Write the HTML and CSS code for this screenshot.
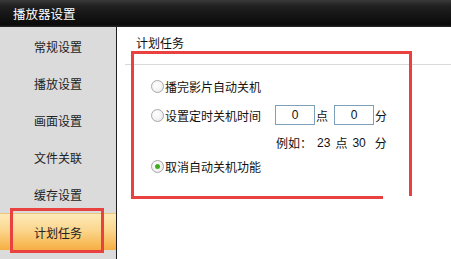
FILE: index.html
```html
<!DOCTYPE html>
<html lang="zh-CN">
<head>
<meta charset="utf-8">
<title>播放器设置</title>
<link rel="stylesheet" href="styles.css">
</head>
<body>
<div class="window">
  <div class="titlebar">播放器设置</div>
  <div class="main">
    <nav class="sidebar">
      <div class="nav-item">常规设置</div>
      <div class="nav-item">播放设置</div>
      <div class="nav-item">画面设置</div>
      <div class="nav-item">文件关联</div>
      <div class="nav-item">缓存设置</div>
      <div class="nav-item active">计划任务</div>
    </nav>
    <section class="content">
      <div class="section-title">计划任务</div>
      <div class="options">
        <div class="opt row1"><span class="radio"></span><span>播完影片自动关机</span></div>
        <div class="opt row2">
          <span class="radio"></span><span class="label">设置定时关机时间</span>
          <span class="field">0</span><span class="unit">点</span>
          <span class="field second">0</span><span class="unit">分</span>
        </div>
        <div class="example">
          <span>例如：</span><span class="num">23</span><span>点</span><span class="num">30</span><span class="last">分</span>
        </div>
        <div class="opt row3"><span class="radio checked"></span><span>取消自动关机功能</span></div>
      </div>
    </section>
  </div>
  <div class="mark mark-content"></div>
  <div class="mark mark-nav"></div>
</div>
</body>
</html>
```
FILE: styles.css
```css
html, body {
  margin: 0;
  padding: 0;
  background: #fff;
}
.window {
  position: relative;
  width: 451px;
  height: 259px;
  overflow: hidden;
  font-family: "Noto Sans CJK SC", "Noto Sans", sans-serif;
  font-size: 12px;
  color: #111;
}
.titlebar {
  height: 27px;
  line-height: 27px;
  padding-left: 13px;
  color: #fff;
  font-size: 12.5px;
  background: linear-gradient(to bottom, #3a3a3a 0%, #222 20%, #151515 55%, #0b0b0b 92%, #2a2a2a 100%);
}
.main {
  display: flex;
  height: 232px;
}
.sidebar {
  width: 116px;
  background: #dbdbdb;
  border-right: 1px solid #1e1e1e;
  padding-top: 1px;
}
.nav-item {
  height: 37px;
  line-height: 37px;
  text-align: center;
  color: #222;
}
.nav-item.active {
  height: 36px;
  background: linear-gradient(to bottom, #fdeab8 0%, #fbd68e 45%, #f8b955 85%, #f6ad44 100%);
  border-top: 1px solid #ecc67a;
}
.content {
  flex: 1;
  background: #fff;
}
.section-title {
  margin-left: 8px;
  padding: 8px 0 13px 11px;
  line-height: 16px;
  border-bottom: 1px solid #d9d9d9;
  color: #111;
}
.options {
  padding-left: 34px;
  padding-top: 11px;
}
.opt {
  display: flex;
  align-items: center;
  height: 20px;
}
.row2 { margin-top: 9px; }
.row3 { margin-top: 3px; }
.radio {
  width: 11px;
  height: 11px;
  border: 1px solid #a8a8a8;
  border-radius: 50%;
  background: radial-gradient(circle at 40% 35%, #ffffff 0%, #f2f2f2 60%, #dcdcdc 100%);
  margin-right: 1px;
  display: flex;
  align-items: center;
  justify-content: center;
  flex: none;
}
.radio.checked::after {
  content: "";
  width: 5px;
  height: 5px;
  border-radius: 50%;
  background: #3fae1e;
}
.label { margin-right: 14px; }
.field {
  width: 38px;
  height: 18px;
  border: 1px solid #7d9fb8;
  line-height: 18px;
  text-align: center;
  font-family: "Liberation Sans", "DejaVu Sans", sans-serif;
  font-size: 12px;
  background: #fff;
}
.unit { margin-left: 1px; }
.field.second { margin-left: 6px; }
.example {
  display: flex;
  gap: 5px;
  height: 20px;
  line-height: 20px;
  margin-top: 8px;
  padding-left: 125px;
}
.example .num {
  font-family: "Liberation Sans", "DejaVu Sans", sans-serif;
  font-size: 12px;
}
.example .last { margin-left: 4px; }
.mark {
  position: absolute;
  border: 3px solid #e8413f;
  pointer-events: none;
}
.mark-content {
  left: 131px;
  top: 51px;
  width: 275px;
  height: 142px;
  border-bottom: none;
}
.mark-content::after {
  content: "";
  position: absolute;
  left: -3px;
  top: 142px;
  width: 252px;
  height: 3px;
  background: #e8413f;
}
.mark-nav {
  left: 10px;
  top: 208px;
  width: 88px;
  height: 39px;
}
```
